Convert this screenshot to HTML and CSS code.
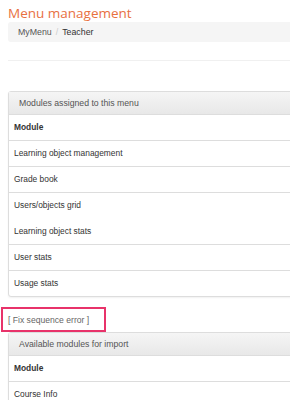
FILE: index.html
```html
<!DOCTYPE html>
<html lang="en">
<head>
  <meta charset="UTF-8">
  <title>Menu management</title>
  <link rel="stylesheet" href="styles.css">
</head>
<body>
  <div class="page">
    <h2 class="page-title">Menu management</h2>

    <ul class="breadcrumb">
      <li><a href="#">MyMenu</a></li>
      <li class="active">Teacher</li>
    </ul>

    <hr class="divider">

    <div class="panel">
      <div class="panel-heading">Modules assigned to this menu</div>
      <table class="table">
        <thead>
          <tr><th>Module</th></tr>
        </thead>
        <tbody>
          <tr><td>Learning object management</td></tr>
          <tr><td>Grade book</td></tr>
          <tr><td>Users/objects grid</td></tr>
          <tr class="no-line"><td>Learning object stats</td></tr>
          <tr><td>User stats</td></tr>
          <tr><td>Usage stats</td></tr>
        </tbody>
      </table>
    </div>

    <div class="fix-box">
      <a href="#" class="fix-link">[ Fix sequence error ]</a>
    </div>

    <div class="panel">
      <div class="panel-heading">Available modules for import</div>
      <table class="table">
        <thead>
          <tr><th>Module</th></tr>
        </thead>
        <tbody>
          <tr><td>Course Info</td></tr>
        </tbody>
      </table>
    </div>
  </div>
</body>
</html>
```

FILE: styles.css
```css
:root {
  --title-color: #e8703f;
  --text-color: #333;
  --muted-text: #555;
  --border-color: #ddd;
  --highlight: #e8336a;
}

* {
  box-sizing: border-box;
  margin: 0;
  padding: 0;
}

html {
  overflow: hidden;
}

body {
  font-family: 'Liberation Sans', Arial, sans-serif;
  font-size: 8.4px;
  color: var(--text-color);
  background: #fff;
}

.page {
  width: 380px;
  padding-left: 8px;
}

.page-title {
  font-family: 'Open Sans', sans-serif;
  font-weight: 400;
  font-size: 13.5px;
  line-height: 17px;
  color: var(--title-color);
  margin-top: 5px;
}

.breadcrumb {
  list-style: none;
  display: flex;
  align-items: center;
  height: 20px;
  padding: 0 10px;
  background: #f5f5f5;
  border-radius: 3px;
  font-size: 8.8px;
}

.breadcrumb a {
  color: #555;
  text-decoration: none;
}

.breadcrumb li + li::before {
  content: "/";
  color: #ccc;
  padding: 0 4px;
}

.breadcrumb .active {
  color: #333;
}

.divider {
  border: 0;
  border-top: 1px solid #f0f0f0;
  margin: 18px 0 30px;
}

.panel {
  border: 1px solid var(--border-color);
  border-radius: 3px;
  box-shadow: 0 1px 2px rgba(0, 0, 0, 0.06);
  background: #fff;
}

.panel-heading {
  height: 23px;
  line-height: 23px;
  padding: 0 10px;
  font-size: 8.7px;
  color: var(--muted-text);
  background: linear-gradient(#f5f5f5, #e8e8e8);
  border-bottom: 1px solid var(--border-color);
}

.table {
  width: 100%;
  border-collapse: collapse;
}

.table th,
.table td {
  text-align: left;
  height: 26px;
  padding: 0 5px;
}

.table th {
  font-weight: 700;
  height: 25px;
  border-bottom: 1px solid var(--border-color);
}

.table tbody tr + tr td {
  border-top: 1px solid var(--border-color);
}

.table tbody tr.no-line td {
  border-top-color: transparent;
}

.fix-box {
  margin: 10px 0 0 -7px;
  width: 105px;
  height: 25px;
  border: 2px solid var(--highlight);
  display: flex;
  align-items: center;
  padding-left: 5px;
}

.fix-link {
  color: #666;
  text-decoration: none;
  font-size: 8.6px;
}
```
